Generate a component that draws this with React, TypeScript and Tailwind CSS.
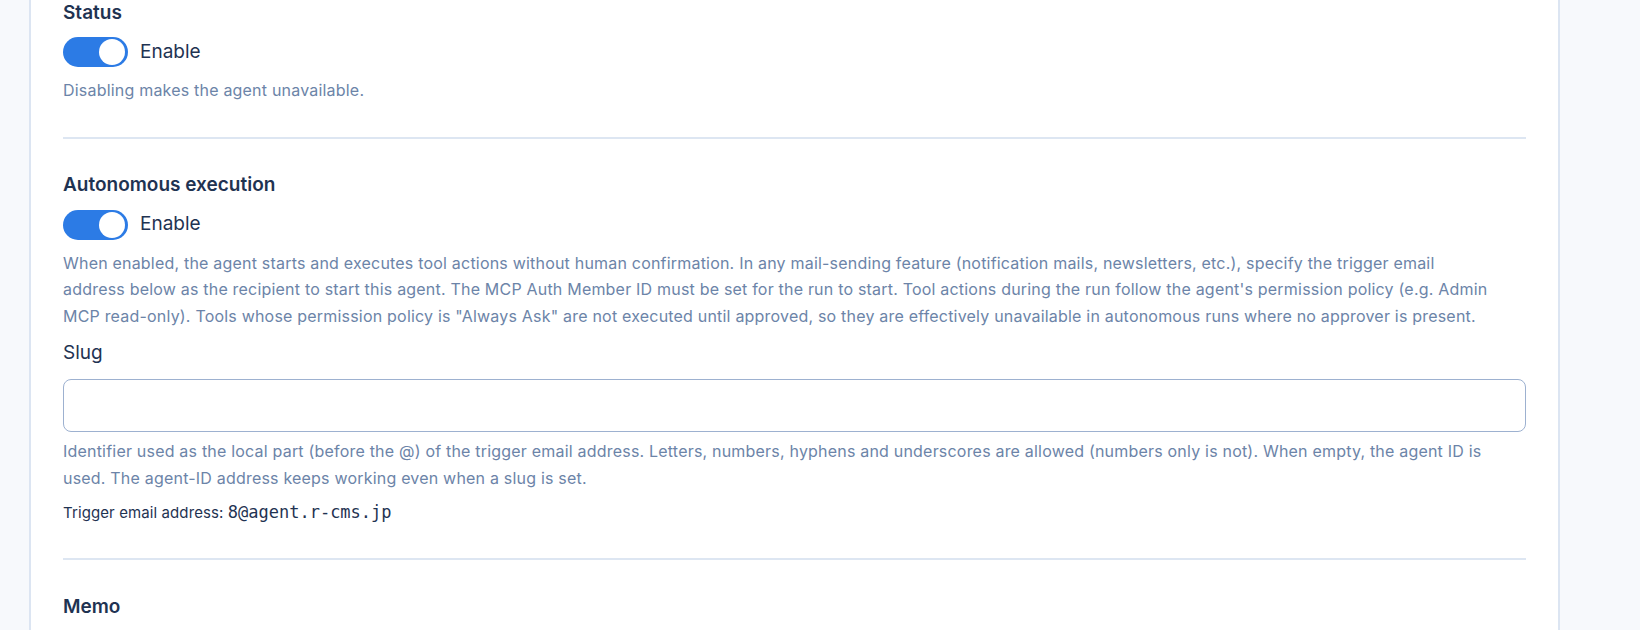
const sans = { fontFamily: 'Inter, "Noto Sans", sans-serif' };
const mono = { fontFamily: '"DejaVu Sans Mono", "Liberation Mono", monospace' };

function Toggle({ on }: { on: boolean }) {
  return (
    <span
      className={`relative inline-flex h-[30px] w-[65px] shrink-0 items-center rounded-full ${
        on ? 'bg-[#2c7be5]' : 'bg-[#c9d4e4]'
      }`}
    >
      <span
        className={`absolute h-[26px] w-[26px] rounded-full bg-white ${on ? 'right-[3px]' : 'left-[3px]'}`}
      />
    </span>
  );
}

function SwitchRow({ label }: { label: string }) {
  return (
    <label className="flex h-8 items-center gap-3">
      <Toggle on />
      <span className="text-[19px] text-[#1f3352]">{label}</span>
    </label>
  );
}

export default function App() {
  return (
    <div className="min-h-screen bg-[#f7f9fc] pl-[29px] pr-[80px]" style={sans}>
      <div className="min-h-screen border-x-2 border-[#dce5f2] bg-white px-8 pt-px">
        {/* Status */}
        <section>
          <h3 className="text-[19px] font-semibold leading-6 text-[#1f3352]">Status</h3>
          <div className="mt-[11px]">
            <SwitchRow label="Enable" />
          </div>
          <p className="mt-[9px] text-[16px] leading-[26.7px] tracking-[0.2px] text-[#6c84a8]">
            Disabling makes the agent unavailable.
          </p>
        </section>

        <hr className="mt-[33px] border-t-2 border-[#dde6f2]" />

        {/* Autonomous execution */}
        <section className="mt-[34px]">
          <h3 className="text-[19px] font-semibold leading-6 text-[#1f3352]">Autonomous execution</h3>
          <div className="mt-3">
            <SwitchRow label="Enable" />
          </div>
          <p className="mt-[9px] text-[16px] leading-[26.7px] tracking-[0.2px] text-[#6c84a8]">
            When enabled, the agent starts and executes tool actions without human confirmation. In any
            mail-sending feature (notification mails, newsletters, etc.), specify the trigger email
            <br />
            address below as the recipient to start this agent. The MCP Auth Member ID must be set for the run
            to start. Tool actions during the run follow the agent's permission policy (e.g. Admin
            <br />
            MCP read-only). Tools whose permission policy is "Always Ask" are not executed until approved, so
            they are effectively unavailable in autonomous runs where no approver is present.
          </p>

          <div className="mt-[9px]">
            <label className="block text-[19px] leading-7 text-[#1f3352]">Slug</label>
            <input
              type="text"
              className="mt-[12px] block h-[53px] w-full rounded-lg border-[1.5px] border-[#9db1d0] bg-white px-4 text-[16px] outline-none"
            />
            <p className="mt-[6px] text-[16px] leading-[26.7px] tracking-[0.2px] text-[#6c84a8]">
              Identifier used as the local part (before the @) of the trigger email address. Letters, numbers,
              hyphens and underscores are allowed (numbers only is not). When empty, the agent ID is
              <br />
              used. The agent-ID address keeps working even when a slug is set.
            </p>
            <p className="mt-[9px] text-[15px] leading-6 tracking-[0.1px] text-[#1f3352]">
              Trigger email address:{' '}
              <span style={mono} className="text-[17px] tracking-normal">
                8@agent.r-cms.jp
              </span>
            </p>
          </div>
        </section>

        <hr className="mt-[33px] border-t-2 border-[#dde6f2]" />

        {/* Memo */}
        <section className="mt-[35px]">
          <h3 className="text-[19px] font-semibold leading-6 text-[#1f3352]">Memo</h3>
          <textarea className="mt-3 block h-32 w-full rounded-lg border-[1.5px] border-[#9db1d0]" />
        </section>
      </div>
    </div>
  );
}
